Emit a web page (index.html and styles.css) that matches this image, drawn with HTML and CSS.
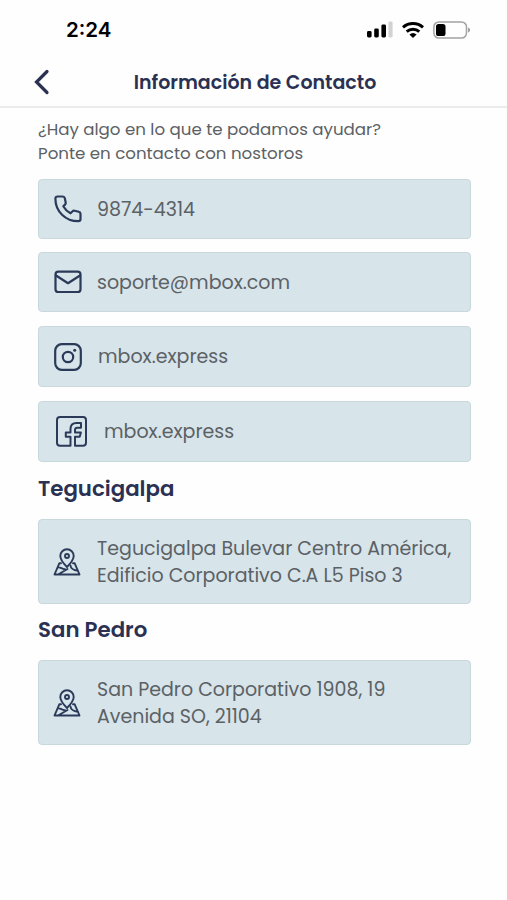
FILE: index.html
```
<!DOCTYPE html>
<html lang="es">
<head>
    <meta charset="UTF-8">
    <meta name="viewport" content="width=device-width, initial-scale=1.0">
    <title>Información de Contacto</title>
    <link rel="stylesheet" href="styles.css">
</head>
<body>
    <div class="status-bar">
        <span class="time">2:24</span>
        <div class="status-icons">
            <svg class="signal" width="26" height="17" viewBox="0 0 26 17">
                <rect x="0" y="10" width="4.6" height="6.5" rx="1.4"/>
                <rect x="7.2" y="7.5" width="4.6" height="9" rx="1.4"/>
                <rect x="14.4" y="3.5" width="4.6" height="13" rx="1.4"/>
                <rect class="off" x="21.4" y="0.5" width="4.2" height="16" rx="1.4"/>
            </svg>
            <svg class="wifi" width="24" height="17" viewBox="0 0 24 17">
                <path d="M2 6.3a15 15 0 0 1 20 0M5.7 10.6a9.6 9.6 0 0 1 12.6 0" fill="none" stroke="#000" stroke-width="3"/>
                <path d="M8.4 13.5a5.4 5.4 0 0 1 7.2 0L12 17z"/>
            </svg>
            <svg class="battery" width="38" height="18" viewBox="0 0 38 18">
                <rect x="0.9" y="0.9" width="32.6" height="16.2" rx="5" fill="none" stroke="#a3a3a3" stroke-width="1.5"/>
                <rect x="3" y="3" width="9.5" height="12" rx="2.6"/>
                <path d="M35.2 6.5c2.3 1 2.3 4 0 5z" fill="#8d8d8d"/>
            </svg>
        </div>
    </div>

    <div class="header">
        <button class="back-btn" aria-label="Volver">
            <svg width="16" height="26" viewBox="0 0 16 26"><path d="M13 2.5L2.5 13 13 23.5"/></svg>
        </button>
        <h1 class="title">Información de Contacto</h1>
    </div>

    <main class="content">
        <p class="intro">¿Hay algo en lo que te podamos ayudar?<br>Ponte en contacto con nostoros</p>

        <div class="card phone">
            <svg class="icon" width="28" height="28" viewBox="0 0 28 28">
                <path d="M3.500 1.500h5.300c1 0 1.800.7 2 1.700l.9 4.300c.2.900-.1 1.500-.7 2.100L9.300 11.300c1.600 3 4 5.400 7.200 7l2.100-2c.5-.5 1.200-.7 2-.5l4.200 1c1 .2 1.700 1 1.700 2v5.200c0 1.300-.9 2.200-2.200 2.200C11.500 26.200 1.400 16.300 1.400 3.700c0-1.300.9-2.200 2.100-2.200z"/>
            </svg>
            <span class="card-text">9874-4314</span>
        </div>
        <div class="card mail">
            <svg class="icon" width="28" height="24" viewBox="0 0 28 24">
                <rect x="1.5" y="1.7" width="25" height="20.3" rx="2.8"/>
                <path d="M2 5.5l12 7.7 12-7.7"/>
            </svg>
            <span class="card-text">soporte@mbox.com</span>
        </div>
        <div class="card instagram">
            <svg class="icon" width="28" height="28" viewBox="0 0 28 28">
                <rect x="1.2" y="1.2" width="25.6" height="25.6" rx="6.5"/>
                <circle cx="14" cy="14" r="5.2"/>
                <circle class="dot" cx="20.7" cy="7.3" r="1.5"/>
            </svg>
            <span class="card-text">mbox.express</span>
        </div>
        <div class="card facebook">
            <svg class="icon" width="31" height="31" viewBox="0 0 31 31">
                <path d="M14.500 29.700H4a3 3 0 0 1-3-3V4a3 3 0 0 1 3-3h23a3 3 0 0 1 3 3v22.700a3 3 0 0 1-3 3h-8v-9h4.700l1.200-4.200H19v-2.300c0-1.500.8-2.400 2.400-2.400H25V7h-4.500c-3.900 0-6 2.300-6 6v3.400H9.800v4.300h4.700z"/>
            </svg>
            <span class="card-text">mbox.express</span>
        </div>

        <h2 class="city">Tegucigalpa</h2>
        <div class="card address">
            <svg class="icon" width="28" height="28" viewBox="0 0 28 28">
                <path d="M14 19C9.500 14.500 7.300 11.300 7.300 8a6.700 6.700 0 0 1 13.400 0c0 3.300-2.200 6.500-6.700 11z"/>
                <circle cx="14" cy="8" r="2"/>
                <path d="M8 15.300H6.300L1.500 26.500h25l-4.800-11.200H20M4.800 19.500c3-.8 3.700 1.800 7.200 1.700M5.500 26.300l9-5.300M17.500 17.500c.3 3.200 3 4.700 7.500 5.300"/>
            </svg>
            <p class="card-text">Tegucigalpa Bulevar Centro América,<br>Edificio Corporativo C.A L5 Piso 3</p>
        </div>

        <h2 class="city">San Pedro</h2>
        <div class="card address">
            <svg class="icon" width="28" height="28" viewBox="0 0 28 28">
                <path d="M14 19C9.500 14.500 7.300 11.300 7.300 8a6.700 6.700 0 0 1 13.400 0c0 3.300-2.200 6.500-6.700 11z"/>
                <circle cx="14" cy="8" r="2"/>
                <path d="M8 15.300H6.300L1.500 26.500h25l-4.800-11.200H20M4.800 19.500c3-.8 3.700 1.800 7.200 1.700M5.500 26.300l9-5.300M17.500 17.500c.3 3.200 3 4.700 7.500 5.300"/>
            </svg>
            <p class="card-text">San Pedro Corporativo 1908, 19<br>Avenida SO, 21104</p>
        </div>
    </main>
</body>
</html>
```
FILE: styles.css
```
:root {
    --navy: #2a3153;
    --icon-color: #2b3a58;
    --text-color: #5b6165;
    --card-bg: #d7e4ea;
    --card-border: #c9d8dd;
}

* {
    margin: 0;
    padding: 0;
    box-sizing: border-box;
}

body {
    min-height: 100vh;
    background-color: #fefefe;
    color: var(--text-color);
    font-family: 'Poppins', 'Inter', sans-serif;
    white-space: nowrap;
}

.status-bar {
    display: flex;
    justify-content: space-between;
    align-items: center;
    height: 58px;
    padding: 1px 36px 0 66px;
}

.time {
    color: #000;
    font-family: 'Inter', sans-serif;
    font-size: 20.5px;
    font-weight: 600;
}

.status-icons {
    display: flex;
    align-items: center;
    gap: 8px;
}

.signal .off {
    fill: #d2d2d2;
}

.header {
    display: flex;
    align-items: center;
    height: 50px;
    padding: 0 34px;
    border-bottom: 2px solid #ececee;
}

.back-btn {
    display: flex;
    width: 16px;
    border: none;
    background: none;
}

.back-btn path {
    fill: none;
    stroke: var(--navy);
    stroke-width: 3.2;
    stroke-linecap: round;
}

.title {
    flex: 1;
    margin-right: 13px;
    color: var(--navy);
    font-size: 19px;
    font-weight: 600;
    text-align: center;
}

.content {
    padding: 10px 36px 0 38px;
}

.intro {
    margin-bottom: 13px;
    font-size: 16.65px;
    line-height: 24px;
}

.card {
    display: flex;
    align-items: center;
    gap: 15px;
    height: 60px;
    margin-bottom: 14px;
    padding: 0 15px;
    background-color: var(--card-bg);
    border: 1px solid var(--card-border);
    border-radius: 4px;
}

.icon {
    flex-shrink: 0;
    fill: none;
    stroke: var(--icon-color);
    stroke-width: 2.2;
    stroke-linecap: round;
    stroke-linejoin: round;
}

.icon .dot {
    fill: var(--icon-color);
    stroke: none;
}

.card-text {
    padding-top: 2px;
    font-size: 19px;
    line-height: 26.5px;
}

.phone {
    margin-bottom: 13px;
}

.instagram {
    height: 61px;
}

.instagram .card-text {
    padding-left: 1px;
}

.facebook {
    gap: 17px;
    height: 61px;
    margin-bottom: 0;
    padding-left: 17px;
}

.facebook .icon {
    stroke-width: 2;
}

.city {
    height: 57px;
    color: var(--navy);
    font-size: 21.3px;
    font-weight: 600;
    line-height: 54px;
}

.address {
    gap: 16px;
    height: 85px;
    margin-bottom: -1px;
    padding-left: 14px;
}

.address .icon {
    stroke-width: 1.9;
}
```
